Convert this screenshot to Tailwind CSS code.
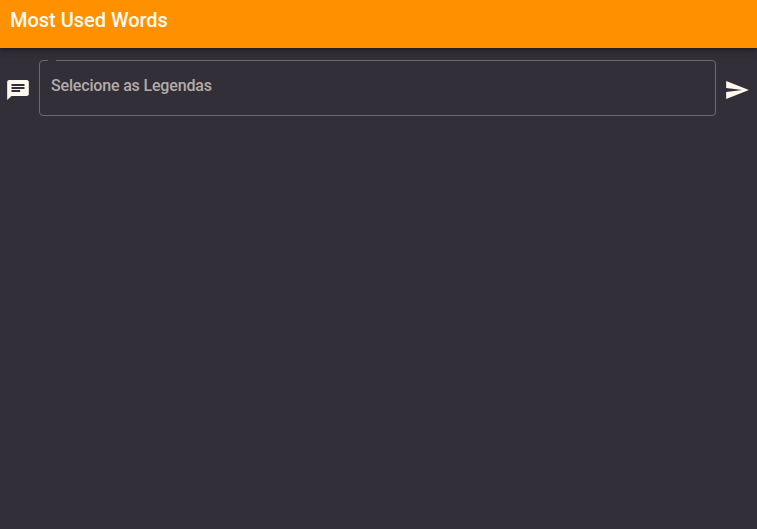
<!DOCTYPE html>
<html lang="pt-BR">
<head>
<meta charset="utf-8">
<title>Most Used Words</title>
<script src="https://cdn.jsdelivr.net/npm/@tailwindcss/browser@4"></script>
</head>
<body class="h-screen overflow-hidden flex flex-col bg-[#322f38] font-['Roboto',sans-serif] text-[#fff8ee]">
<header class="relative h-12 shrink-0 bg-[#ff9100] px-2.5 pt-1 shadow-[0_2px_4px_-1px_rgba(0,0,0,.2),0_4px_5px_0_rgba(0,0,0,.14),0_1px_10px_0_rgba(0,0,0,.12)]">
<h1 class="text-[20px] leading-8 font-medium tracking-[-0.02px] text-[#fffaf3]">Most Used Words</h1>
</header>
<main class="flex items-start pl-[5px] pr-[7px] pt-3">
<svg class="mt-[18px] h-6 w-[26px] shrink-0" viewBox="0 0 24 24" preserveAspectRatio="none" fill="currentColor"><path d="M20 2H4c-1.1 0-1.99.9-1.99 2L2 22l4-4h14c1.100 0 2-.9 2-2V4c0-1.100-.9-2-2-2zM6 9h12v2H6V9zm8 5H6v-2h8v2zm4-6H6V6h12v2z"/></svg>
<fieldset class="relative ml-2 flex h-14 grow rounded border border-[#6d6a6e]">
<span class="absolute -top-px left-2 h-px w-2 bg-[#322f38]"></span>
<label class="pl-[11px] pt-[13px] text-base leading-6 font-medium tracking-[-0.17px] text-[#b3aca8]">Selecione as Legendas</label>
</fieldset>
<svg class="ml-2 mt-[18px] h-6 w-[26px] shrink-0" viewBox="0 0 24 24" preserveAspectRatio="none" fill="currentColor"><path d="M2.01 21L23 12 2.01 3 2 10l15 2-15 2z"/></svg>
</main>
</body>
</html>
